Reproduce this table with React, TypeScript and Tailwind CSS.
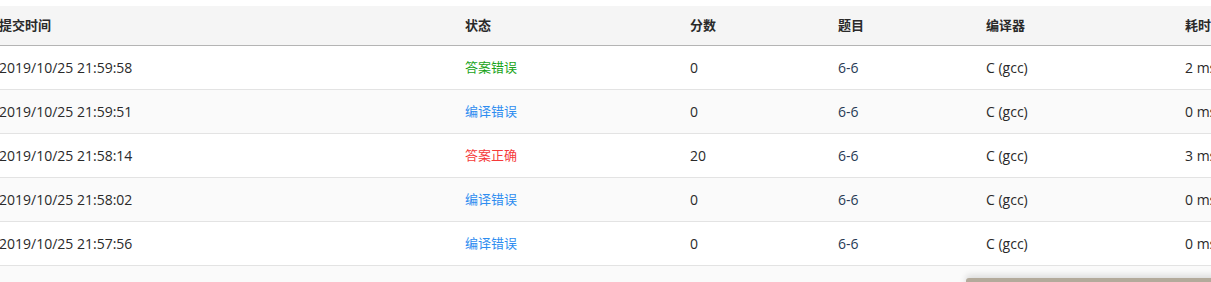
import React from "react";

const rows = [
  { time: "2019/10/25 21:59:58", status: "答案错误", score: "0", problem: "6-6", compiler: "C (gcc)", cost: "2 ms" },
  { time: "2019/10/25 21:59:51", status: "编译错误", score: "0", problem: "6-6", compiler: "C (gcc)", cost: "0 ms" },
  { time: "2019/10/25 21:58:14", status: "答案正确", score: "20", problem: "6-6", compiler: "C (gcc)", cost: "3 ms" },
  { time: "2019/10/25 21:58:02", status: "编译错误", score: "0", problem: "6-6", compiler: "C (gcc)", cost: "0 ms" },
  { time: "2019/10/25 21:57:56", status: "编译错误", score: "0", problem: "6-6", compiler: "C (gcc)", cost: "0 ms" },
];

function statusColor(s: string) {
  if (s === "答案错误") return "text-[#18a318]";
  if (s === "答案正确") return "text-[#f53a3a]";
  return "text-[#2d8cf0]";
}

const cols = "grid grid-cols-[466px_225px_148px_148px_199px_1fr] ml-[-1px]";

export default function App() {
  return (
    <div
      className="relative w-[1211px] h-[282px] overflow-hidden bg-white pt-[6px] text-[13px] text-[#2a2a2a]"
      style={{ fontFamily: '"Open Sans", "Noto Sans CJK SC", sans-serif' }}
    >
      <div className={`${cols} h-[40px] items-center bg-[#f5f5f5] border-b border-[#b4b4b4] font-bold`}>
        <div>提交时间</div>
        <div>状态</div>
        <div>分数</div>
        <div>题目</div>
        <div>编译器</div>
        <div className="whitespace-nowrap">耗时</div>
      </div>
      {rows.map((r, i) => (
        <div
          key={i}
          className={`${cols} h-[44px] items-center border-b border-[#e3e3e3] text-[14px] ${i % 2 === 1 ? "bg-[#fafafa]" : "bg-white"}`}
        >
          <div>{r.time}</div>
          <div className={`text-[13px] ${statusColor(r.status)}`}>{r.status}</div>
          <div>{r.score}</div>
          <div className="text-[#283a55]">{r.problem}</div>
          <div>{r.compiler}</div>
          <div className="whitespace-nowrap">{r.cost}</div>
        </div>
      ))}
      <div className="h-[20px] bg-[#fafafa]" />
      <div className="absolute left-[966px] top-[278px] w-[260px] h-[12px] rounded-tl-[3px] bg-[#b3aa9b] shadow-[0_-3px_6px_rgba(0,0,0,0.12)]" />
    </div>
  );
}
